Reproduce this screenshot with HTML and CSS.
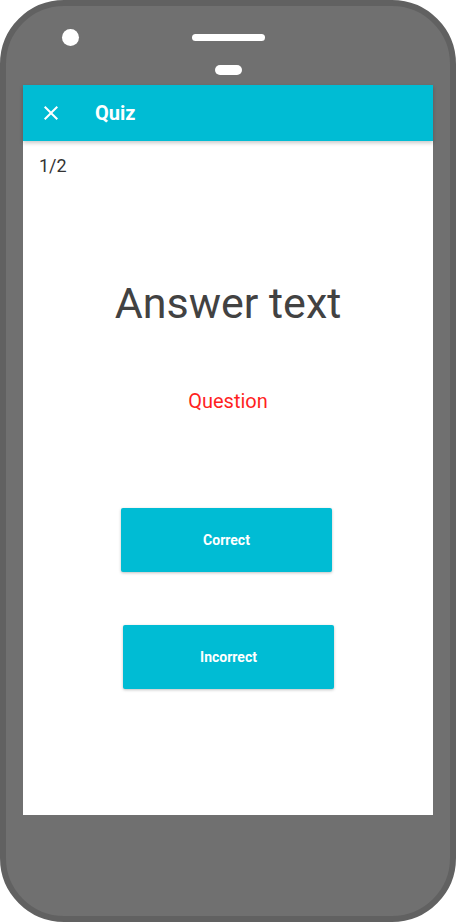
FILE: index.html
```html
<!DOCTYPE html>
<html lang="en">
<head>
<meta charset="utf-8">
<title>Quiz</title>
<link rel="stylesheet" href="styles.css">
</head>
<body>
<div class="phone">
  <div class="bezel-top">
    <div class="camera"></div>
    <div class="bezel-center">
      <div class="speaker"></div>
      <div class="sensor"></div>
    </div>
    <div></div>
  </div>
  <div class="screen">
    <header class="appbar">
      <svg class="close-icon" viewBox="0 0 24 24" width="24" height="24" aria-hidden="true">
        <path d="M19 6.41L17.59 5 12 10.59 6.41 5 5 6.41 10.59 12 5 17.59 6.41 19 12 13.41 17.59 19 19 17.59 13.41 12z" fill="#ffffff"/>
      </svg>
      <h1 class="title">Quiz</h1>
    </header>
    <div class="content">
      <div class="progress">1/2</div>
      <div class="answer">Answer text</div>
      <div class="question">Question</div>
      <button class="btn btn-correct">Correct</button>
      <button class="btn btn-incorrect">Incorrect</button>
    </div>
  </div>
</div>
</body>
</html>
```
FILE: styles.css
```css
* { box-sizing: border-box; }
html, body { margin: 0; padding: 0; background: #ffffff; }
body { font-family: Roboto, "Noto Sans", Arial, sans-serif; }

.phone {
  width: 456px;
  height: 922px;
  background: #707070;
  border: 6px solid #616161;
  border-radius: 64px;
  display: flex;
  flex-direction: column;
  overflow: hidden;
}

.bezel-top {
  height: 79px;
  display: grid;
  grid-template-columns: 1fr auto 1fr;
}
.camera {
  width: 17px;
  height: 17px;
  border-radius: 50%;
  background: #ffffff;
  margin: 23px 0 0 56px;
}
.bezel-center {
  display: flex;
  flex-direction: column;
  align-items: center;
  padding-top: 28px;
}
.speaker {
  width: 73px;
  height: 7px;
  border-radius: 4px;
  background: #ffffff;
}
.sensor {
  width: 27px;
  height: 10px;
  border-radius: 5px;
  background: #ffffff;
  margin-top: 24px;
}

.screen {
  width: 410px;
  height: 730px;
  margin-left: 17px;
  background: #ffffff;
  display: flex;
  flex-direction: column;
}

.appbar {
  height: 56px;
  background: #00bcd4;
  display: flex;
  align-items: center;
  padding-left: 16px;
  box-shadow: 0 2px 4px rgba(0,0,0,0.22);
  position: relative;
  z-index: 1;
}
.close-icon { display: block; flex: none; }
.title {
  margin: 0 0 0 32px;
  font-size: 20px;
  font-weight: 700;
  color: #ffffff;
  line-height: 28px;
}

.content {
  display: flex;
  flex-direction: column;
  align-items: stretch;
}
.progress {
  padding: 13px 0 0 16px;
  font-size: 18px;
  line-height: 24px;
  color: #333333;
}
.answer {
  margin-top: 99px;
  text-align: center;
  font-size: 43px;
  line-height: 52px;
  color: #424242;
}
.question {
  margin-top: 58px;
  text-align: center;
  font-size: 20px;
  line-height: 28px;
  color: #ff1f1f;
}
.btn {
  align-self: flex-start;
  width: 211px;
  height: 64px;
  border: none;
  border-radius: 2px;
  background: #00bcd4;
  color: #ffffff;
  font-family: Roboto, "Noto Sans", Arial, sans-serif;
  font-size: 14px;
  font-weight: 700;
  box-shadow: 0 1px 3px rgba(0,0,0,0.25);
  padding: 0;
}
.btn-correct { margin: 93px 0 0 98px; }
.btn-incorrect { margin: 53px 0 0 100px; }
```
